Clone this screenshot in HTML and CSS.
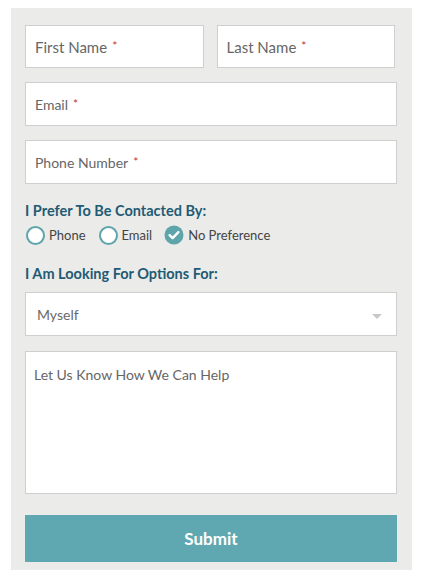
FILE: index.html
```html
<!DOCTYPE html>
<html lang="en">
<head>
<meta charset="utf-8">
<title>Contact Form</title>
<link rel="stylesheet" href="styles.css">
</head>
<body>
<form class="panel">
  <div class="row">
    <div class="field"><span>First Name</span><span class="req">*</span></div>
    <div class="field"><span>Last Name</span><span class="req">*</span></div>
  </div>
  <div class="field wide"><span>Email</span><span class="req">*</span></div>
  <div class="field wide"><span>Phone Number</span><span class="req">*</span></div>
  <div class="label first">I Prefer To Be Contacted By:</div>
  <div class="radios">
    <span class="opt"><span class="radio"></span>Phone</span>
    <span class="opt"><span class="radio"></span>Email</span>
    <span class="opt"><span class="radio checked"><svg viewBox="0 0 20 20" width="20" height="20"><circle cx="10" cy="10" r="9.5" fill="#5ea4ab"/><path d="M5.6 10.2 L8.6 13.1 L14.4 7.2" fill="none" stroke="#fff" stroke-width="2.4" stroke-linecap="round" stroke-linejoin="round"/></svg></span>No Preference</span>
  </div>
  <div class="label second">I Am Looking For Options For:</div>
  <div class="field wide select">Myself<span class="arrow"></span></div>
  <div class="field wide area">Let Us Know How We Can Help</div>
  <div class="submit">Submit</div>
</form>
</body>
</html>
```
FILE: styles.css
```css
html, body {
  margin: 0;
  padding: 0;
  background: #fff;
}
body {
  font-family: Lato, "Open Sans", "Liberation Sans", sans-serif;
}
.panel {
  box-sizing: border-box;
  width: 401px;
  margin: 8px 0 0 11px;
  padding: 17px 15px 8px 14px;
  background: #ebebe9;
  display: flex;
  flex-direction: column;
}
.row {
  display: flex;
  gap: 13px;
  margin-right: 2px;
  margin-bottom: 14px;
}
.row .field {
  flex: 1;
  margin-bottom: 0;
  font-size: 15px;
}
.field {
  box-sizing: border-box;
  height: 43px;
  background: #fff;
  border: 1px solid #cfcfcf;
  padding: 0 9px;
  display: flex;
  align-items: center;
  font-size: 14px;
  color: #666;
  margin-bottom: 14px;
}
.field.wide {
  height: 44px;
}
.req {
  color: #c4342d;
  font-size: 12px;
  margin-left: 5px;
  position: relative;
  top: -1px;
}
.label {
  font-size: 14.5px;
  font-weight: 700;
  color: #1f5b74;
  line-height: 16px;
}
.label.first {
  margin-top: 5px;
}
.radios {
  display: flex;
  align-items: center;
  gap: 12px;
  font-size: 13px;
  color: #444;
  height: 20px;
  margin-top: 6px;
}
.opt {
  display: flex;
  align-items: center;
  gap: 4px;
}
.radio {
  box-sizing: border-box;
  width: 19px;
  height: 19px;
  border-radius: 50%;
  border: 2px solid #5ea4ab;
  background: #fff;
  display: inline-block;
  margin-left: 1px;
}
.radio.checked {
  border: none;
  width: 20px;
  height: 20px;
  background: transparent;
  margin-left: 0;
}
.radio svg {
  display: block;
}
.label.second {
  margin-top: 21px;
  margin-bottom: 10px;
}
.select {
  position: relative;
  padding-left: 11px;
  color: #6a6a6a;
  margin-bottom: 15px;
}
.arrow {
  position: absolute;
  right: 14px;
  top: 21px;
  width: 0;
  height: 0;
  border-left: 5px solid transparent;
  border-right: 5px solid transparent;
  border-top: 5px solid #c8c8c8;
}
.field.area {
  height: 143px;
  align-items: flex-start;
  padding: 14px 8px;
  margin-bottom: 21px;
}
.submit {
  height: 47px;
  background: #5fa8b1;
  color: #fff;
  font-size: 17px;
  font-weight: 700;
  display: flex;
  align-items: center;
  justify-content: center;
}
```
